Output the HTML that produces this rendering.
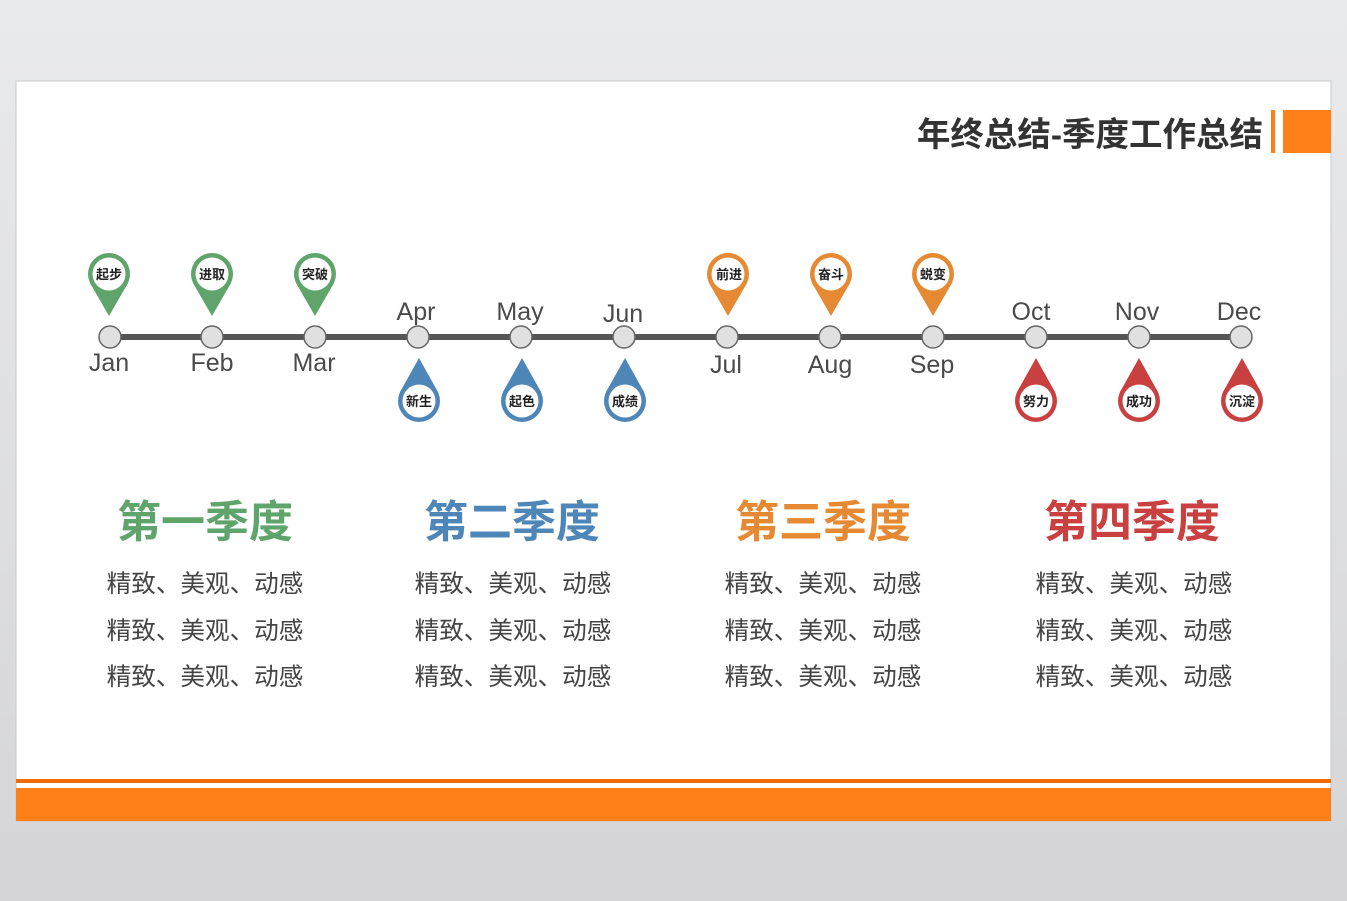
<!DOCTYPE html>
<html><head><meta charset="utf-8"><style>
html,body{margin:0;padding:0;width:1347px;height:901px;overflow:hidden;background:linear-gradient(#e9eaec,#d5d5d7);}
svg{position:absolute;left:0;top:0}
</style></head><body>
<svg width="1347" height="901" viewBox="0 0 1347 901" font-family="'Liberation Sans','Noto Sans CJK SC',sans-serif">
<defs>
<g id="pu"><path d="M-19,9 L0,42 L19,9 Z"/><circle r="21"/><circle r="16.5" fill="#fff"/></g>
<g id="pd"><path d="M-19,-9 L0,-43 L19,-9 Z"/><circle r="21"/><circle r="16.5" fill="#fff"/></g>
</defs>
<rect x="16" y="81" width="1315" height="740" fill="#fff" stroke="#c8c8c8" stroke-width="1"/>
<rect x="16" y="779" width="1315" height="4" fill="#f06c00"/>
<rect x="16" y="788" width="1315" height="33" fill="#ff8019"/>
<text x="1263" y="146" text-anchor="end" font-size="33.5" font-weight="bold" fill="#333">年终总结-季度工作总结</text>
<rect x="1271" y="110" width="4" height="43" fill="#ff8019"/>
<rect x="1283" y="110" width="48" height="43" fill="#ff8019"/>
<rect x="110" y="334" width="1131" height="6" fill="#555"/>
<g fill="#e0e0e0" stroke="#666" stroke-width="1.5">
<circle cx="110" cy="337" r="11"/><circle cx="212" cy="337" r="11"/><circle cx="315" cy="337" r="11"/><circle cx="418" cy="337" r="11"/><circle cx="521" cy="337" r="11"/><circle cx="624" cy="337" r="11"/><circle cx="727" cy="337" r="11"/><circle cx="830" cy="337" r="11"/><circle cx="933" cy="337" r="11"/><circle cx="1036" cy="337" r="11"/><circle cx="1139" cy="337" r="11"/><circle cx="1241" cy="337" r="11"/>
</g>
<g font-size="25" fill="#4a4a4a" text-anchor="middle">
<text x="109" y="371">Jan</text><text x="212" y="371">Feb</text><text x="314" y="371">Mar</text>
<text x="416" y="320">Apr</text><text x="520" y="320">May</text><text x="623" y="322">Jun</text>
<text x="726" y="373">Jul</text><text x="830" y="373">Aug</text><text x="932" y="373">Sep</text>
<text x="1031" y="320">Oct</text><text x="1137" y="320">Nov</text><text x="1239" y="320">Dec</text>
</g>
<g fill="#5fa46a"><use href="#pu" x="109" y="274"/><use href="#pu" x="212" y="274"/><use href="#pu" x="315" y="274"/></g>
<g fill="#4f86b8"><use href="#pd" x="419" y="401"/><use href="#pd" x="522" y="401"/><use href="#pd" x="625" y="401"/></g>
<g fill="#e58a32"><use href="#pu" x="728" y="274"/><use href="#pu" x="831" y="274"/><use href="#pu" x="933" y="274"/></g>
<g fill="#c94040"><use href="#pd" x="1036" y="401"/><use href="#pd" x="1139" y="401"/><use href="#pd" x="1242" y="401"/></g>
<g font-size="13" font-weight="bold" fill="#222" text-anchor="middle">
<text x="109" y="279">起步</text><text x="212" y="279">进取</text><text x="315" y="279">突破</text>
<text x="419" y="406">新生</text><text x="522" y="406">起色</text><text x="625" y="406">成绩</text>
<text x="729" y="279">前进</text><text x="831" y="279">奋斗</text><text x="933" y="279">蜕变</text>
<text x="1036" y="406">努力</text><text x="1139" y="406">成功</text><text x="1242" y="406">沉淀</text>
</g>
<g font-size="44" font-weight="bold" text-anchor="middle">
<text x="205" y="537" fill="#5fa46a">第一季度</text>
<text x="512" y="537" fill="#4f86b8">第二季度</text>
<text x="823" y="537" fill="#e58a32">第三季度</text>
<text x="1132" y="537" fill="#c94040">第四季度</text>
</g>
<g font-size="24.6" fill="#444" text-anchor="middle">
<text x="205" y="592">精致、美观、动感</text><text x="205" y="639">精致、美观、动感</text><text x="205" y="685">精致、美观、动感</text>
<text x="513" y="592">精致、美观、动感</text><text x="513" y="639">精致、美观、动感</text><text x="513" y="685">精致、美观、动感</text>
<text x="823" y="592">精致、美观、动感</text><text x="823" y="639">精致、美观、动感</text><text x="823" y="685">精致、美观、动感</text>
<text x="1134" y="592">精致、美观、动感</text><text x="1134" y="639">精致、美观、动感</text><text x="1134" y="685">精致、美观、动感</text>
</g>
</svg>
</body></html>
